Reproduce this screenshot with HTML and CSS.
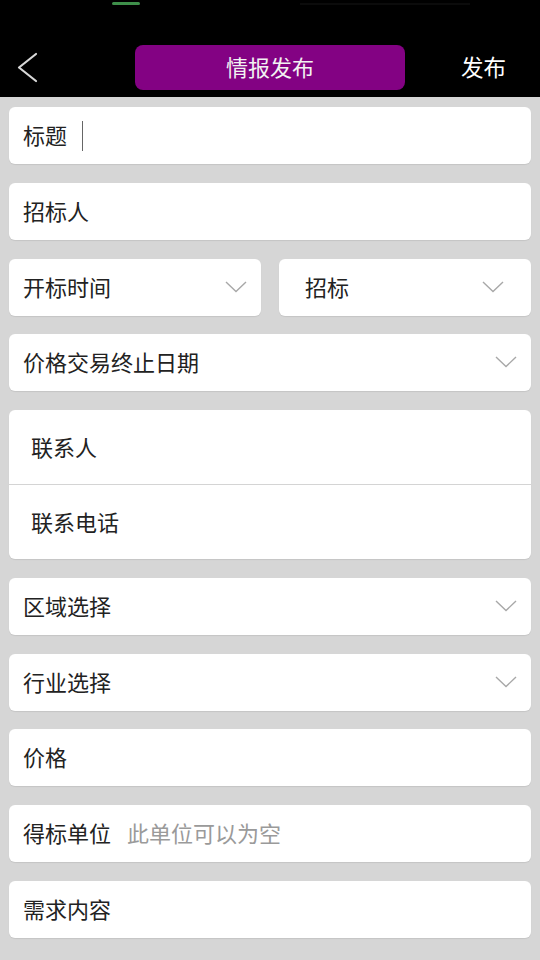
FILE: index.html
```html
<!DOCTYPE html>
<html lang="zh">
<head>
<meta charset="utf-8">
<title>情报发布</title>
<link rel="stylesheet" href="styles.css">
</head>
<body>
<div class="topbar">
  <div class="status">
    <span class="status-green"></span>
    <span class="status-dim"></span>
  </div>
  <div class="nav">
    <span class="back">
      <svg width="24" height="32" viewBox="0 0 24 32"><polyline points="20,2 3,15.5 20,29" fill="none" stroke="#d8d8d8" stroke-width="2.2" stroke-linecap="round" stroke-linejoin="round"/></svg>
    </span>
    <div class="title-btn">情报发布</div>
    <span class="publish">发布</span>
  </div>
</div>

<div class="form">
  <div class="card"><span class="label">标题</span><span class="cursor"></span></div>
  <div class="card"><span class="label">招标人</span></div>
  <div class="row">
    <div class="card"><span class="label">开标时间</span><span class="chev"><svg width="22" height="12" viewBox="0 0 22 12"><polyline points="1,1 11,10.5 21,1" fill="none" stroke="#a8a8a8" stroke-width="1.4"/></svg></span></div>
    <div class="card wide-pad"><span class="label">招标</span><span class="chev"><svg width="22" height="12" viewBox="0 0 22 12"><polyline points="1,1 11,10.5 21,1" fill="none" stroke="#a8a8a8" stroke-width="1.4"/></svg></span></div>
  </div>
  <div class="card"><span class="label">价格交易终止日期</span><span class="chev"><svg width="22" height="12" viewBox="0 0 22 12"><polyline points="1,1 11,10.5 21,1" fill="none" stroke="#a8a8a8" stroke-width="1.4"/></svg></span></div>
  <div class="card double">
    <div class="sub"><span class="label">联系人</span></div>
    <div class="sub"><span class="label">联系电话</span></div>
  </div>
  <div class="card"><span class="label">区域选择</span><span class="chev"><svg width="22" height="12" viewBox="0 0 22 12"><polyline points="1,1 11,10.5 21,1" fill="none" stroke="#a8a8a8" stroke-width="1.4"/></svg></span></div>
  <div class="card"><span class="label">行业选择</span><span class="chev"><svg width="22" height="12" viewBox="0 0 22 12"><polyline points="1,1 11,10.5 21,1" fill="none" stroke="#a8a8a8" stroke-width="1.4"/></svg></span></div>
  <div class="card"><span class="label">价格</span></div>
  <div class="card"><span class="label">得标单位</span><span class="placeholder">此单位可以为空</span></div>
  <div class="card"><span class="label">需求内容</span></div>
</div>
</body>
</html>
```

FILE: styles.css
```css
* { box-sizing: border-box; }
html, body {
  margin: 0;
  padding: 0;
}
body {
  width: 540px;
  height: 960px;
  overflow: hidden;
  background: #d6d6d6;
  font-family: "Noto Sans CJK SC", "Noto Sans", sans-serif;
  color: #222;
}
.topbar {
  background: #000;
  height: 97px;
}
.status {
  height: 40px;
  position: relative;
}
.status-green {
  position: absolute;
  left: 112px;
  top: 2px;
  width: 28px;
  height: 3px;
  border-radius: 2px;
  background: #3e8f4a;
}
.status-dim {
  position: absolute;
  left: 300px;
  top: 3px;
  width: 170px;
  height: 2px;
  background: #0b0b0b;
}
.nav {
  height: 57px;
  display: flex;
  align-items: center;
  padding: 0 0 2px 16px;
}
.back {
  width: 119px;
  display: flex;
  align-items: center;
  height: 32px;
}
.back svg { display: block; }
.title-btn {
  width: 270px;
  height: 45px;
  border-radius: 8px;
  background: #830283;
  color: #f2f2f2;
  font-size: 22px;
  display: flex;
  align-items: center;
  justify-content: center;
  padding-bottom: 3px;
}
.publish {
  margin-left: 56px;
  color: #fff;
  font-size: 22.5px;
  padding-bottom: 3px;
}
.form {
  padding: 10px 9px 0 9px;
  display: flex;
  flex-direction: column;
  gap: 18.75px;
}
.card {
  height: 57px;
  background: #fff;
  border-radius: 6px;
  box-shadow: 0 1px 1px rgba(0, 0, 0, 0.08);
  display: flex;
  align-items: center;
  padding: 0 14px 3px 14px;
  font-size: 22px;
  min-width: 0;
}
.label {
  line-height: 1;
  white-space: nowrap;
}
.chev {
  margin-left: auto;
  display: flex;
  align-items: center;
  padding-top: 2px;
}
.chev svg { display: block; }
.row {
  display: grid;
  grid-template-columns: 1fr 1fr;
  gap: 18px;
}
.wide-pad {
  padding: 0 27px 3px 26px;
}
.cursor {
  display: block;
  width: 1px;
  height: 30px;
  background: #666;
  margin-left: 15px;
  margin-top: 3px;
}
.placeholder {
  color: #9a9a9a;
  margin-left: 16px;
  line-height: 1;
  white-space: nowrap;
}
.double {
  height: 149px;
  flex-direction: column;
  align-items: stretch;
  padding: 0;
}
.sub {
  flex: 1;
  display: flex;
  align-items: center;
  padding: 0 22px 3px 22px;
}
.sub + .sub {
  border-top: 1px solid #d4d4d4;
}
```
